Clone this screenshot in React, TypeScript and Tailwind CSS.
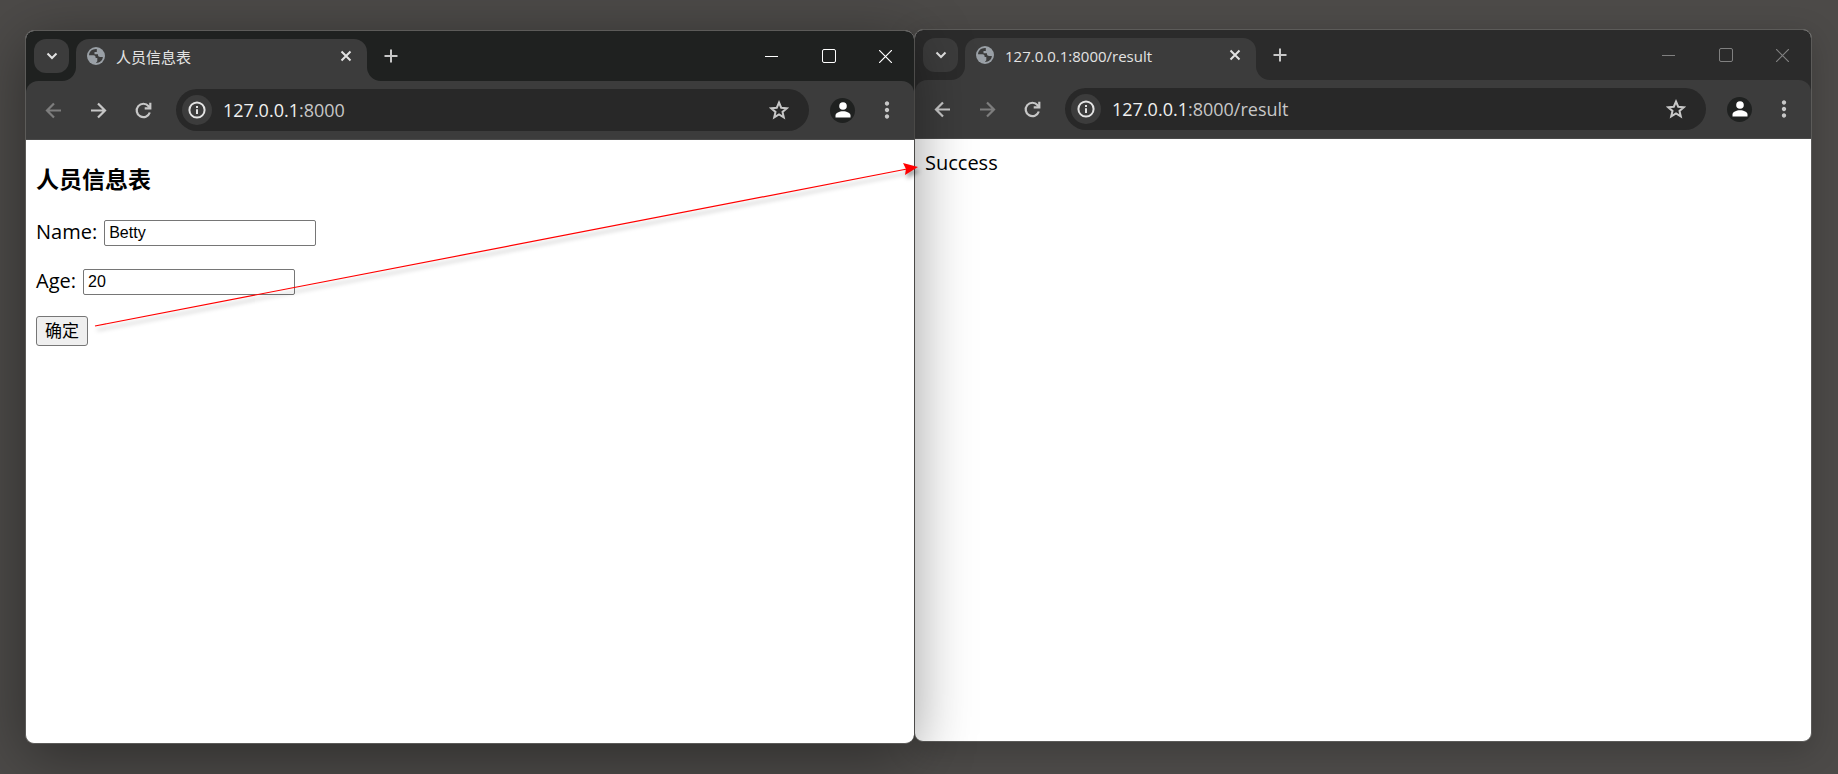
import { type ReactNode, useState } from 'react'
import { MdMoreVert } from 'react-icons/md'

type WindowProps = {
  title: string
  host: string
  path: string
  active?: boolean
  canGoBack?: boolean
  canGoForward?: boolean
  className: string
  children: ReactNode
}

function GlobeIcon() {
  return (
    <svg viewBox="0 0 18 18" className="size-[18px]">
      <circle cx="9" cy="9" r="9" fill="#9aa0a6" />
      <path
        d="M9.800 2c-4.600-.4-7.600 2.600-7.800 6.200h4.500c1.300 0 2.100.8 2.100 2v.9h1.700v3.200l-1.400 1.600c3.500.2 6.600-2.300 7-5.900h-2.700c-1.400 0-2.200-.8-2.200-2V7.200H7.500V5.100h2.300Z"
        fill="#3c3c3c"
      />
    </svg>
  )
}

function ToolbarIcon({ children }: { children: ReactNode }) {
  return (
    <svg viewBox="0 0 23 23" className="size-[23px]" fill="none" stroke="currentColor" strokeWidth="2.200">
      {children}
    </svg>
  )
}

function TabStrip({ title, active }: { title: string; active?: boolean }) {
  return (
    <div className={`flex h-[50px] pl-2 ${active ? 'bg-[#1f2120]' : 'bg-[#2b2b2b]'}`}>
      <button
        aria-label="Search tabs"
        className="mt-2 flex h-[34px] w-[35px] items-center justify-center rounded-xl bg-[#3c3c3c] text-[#e3e3e3]">
        <svg viewBox="0 0 12 8" className="w-3" fill="none" stroke="currentColor" strokeWidth="2">
          <path d="M1.500 1.500 6 6l4.500-4.500" />
        </svg>
      </button>

      <div className="relative mt-2 ml-[7px] flex h-[42px] w-[291px] rounded-t-[13px] bg-[#3c3c3c] pt-2 pl-[11px] text-[#e3e3e3]">
        {/* curved feet of the tab */}
        <svg viewBox="0 0 14 14" className="absolute bottom-0 -left-3.5 w-3.5 text-[#3c3c3c]">
          <path d="M14 0v14H0A14 14 0 0 0 14 0Z" fill="currentColor" />
        </svg>
        <svg viewBox="0 0 14 14" className="absolute -right-3.5 bottom-0 w-3.5 text-[#3c3c3c]">
          <path d="M0 0v14h14A14 14 0 0 1 0 0Z" fill="currentColor" />
        </svg>
        <GlobeIcon />
        <span className="ml-[11px] text-[15px] leading-5">{title}</span>
        <button aria-label="Close tab" className="mr-[15px] ml-auto flex h-[18px] items-center">
          <svg viewBox="0 0 12 12" className="w-3" fill="none" stroke="currentColor" strokeWidth="2">
            <path d="m1.500 1.500 9 9m0-9-9 9" />
          </svg>
        </button>
      </div>

      <button aria-label="New tab" className="ml-[17px] text-[#c7c7c7]">
        <svg viewBox="0 0 14 14" className="w-3.5" fill="none" stroke="currentColor" strokeWidth="2">
          <path d="M7 .5v13M.5 7h13" />
        </svg>
      </button>

      <div className={`ml-auto flex ${active ? 'text-white' : 'text-[#808080]'}`}>
        <button aria-label="Minimize" className="flex w-[57px] items-center justify-center">
          <svg viewBox="0 0 13 13" className="w-[13px]" fill="none" stroke="currentColor">
            <path d="M0 6.500h13" />
          </svg>
        </button>
        <button aria-label="Maximize" className="flex w-[57px] items-center justify-center">
          <svg viewBox="0 0 14 14" className="w-3.5" fill="none" stroke="currentColor">
            <rect x=".5" y=".5" width="13" height="13" rx="1.500" />
          </svg>
        </button>
        <button aria-label="Close" className="flex w-[57px] items-center justify-center">
          <svg viewBox="0 0 13 13" className="w-[13px]" fill="none" stroke="currentColor" strokeWidth="1.200">
            <path d="m0 0 13 13M13 0 0 13" />
          </svg>
        </button>
      </div>
    </div>
  )
}

function BrowserWindow({ title, host, path, active, canGoBack, canGoForward, className, children }: WindowProps) {
  const [address, setAddress] = useState(path)
  const addressId = active ? 'address-front' : 'address-back'

  return (
    <section className={`flex flex-col overflow-hidden rounded-[9px] border-[#5c5b59] bg-white ${className}`}>
      <TabStrip title={title} active={active} />

      <div className={active ? 'bg-[#1f2120]' : 'bg-[#2b2b2b]'}>
        <div className="flex h-[59px] items-center rounded-t-xl border-b border-[#4a4a4a] bg-[#3c3c3c] pl-4 text-[#c7c7c7]">
          <button aria-label="Back" className={canGoBack ? '' : 'text-[#7d7d7d]'}>
            <ToolbarIcon>
              <path d="M19 11.500H5.500M12 4.500l-7 7 7 7" />
            </ToolbarIcon>
          </button>
          <button aria-label="Forward" className={`ml-[22px] ${canGoForward ? '' : 'text-[#7d7d7d]'}`}>
            <ToolbarIcon>
              <path d="M4 11.500h13.500M11 4.500l7 7-7 7" />
            </ToolbarIcon>
          </button>
          <button aria-label="Reload" className="ml-[22px]">
            <ToolbarIcon>
              <path d="M17.800 13.500a6.700 6.700 0 1 1-1.200-6.300l1.400 1.600" />
              <path d="M18.300 3.800v5.600h-5.600" />
            </ToolbarIcon>
          </button>

          <div className="ml-[21px] flex h-[42px] flex-1 items-center rounded-full bg-[#282828] pr-[18px] pl-1.5">
            <button
              aria-label="Site information"
              className="flex size-[30px] items-center justify-center rounded-full bg-[#3c3c3c] text-[#e3e3e3]">
              <svg viewBox="0 0 18 18" className="size-[18px]" fill="none" stroke="currentColor" strokeWidth="2">
                <circle cx="9" cy="9" r="7.600" />
                <path d="M9 8.200V13M9 5v2" />
              </svg>
            </button>
            <div className="ml-[11px] flex flex-1 items-center text-[18px] leading-7">
              <label htmlFor={addressId} className="text-[#f0f0f0]">
                {host}
              </label>
              <input
                id={addressId}
                value={address}
                onChange={(event) => setAddress(event.target.value)}
                className="min-w-0 flex-1 outline-none"
              />
            </div>
            <button aria-label="Bookmark this page">
              <svg viewBox="0 0 24 24" className="size-6" fill="none" stroke="currentColor" strokeWidth="2">
                <path d="m12 4.500 2.200 5.200 5.600.5-4.300 3.700 1.300 5.500-4.800-2.900-4.800 2.900 1.300-5.500-4.300-3.700 5.600-.5Z" />
              </svg>
            </button>
          </div>

          <button
            aria-label="Profile"
            className="ml-[21px] flex size-[25px] items-center justify-center rounded-full bg-[#1f2120] text-white">
            <svg viewBox="0 0 16 16" className="w-4" fill="currentColor">
              <circle cx="8" cy="4" r="3.800" />
              <path d="M.5 15.500v-2c0-2.600 3.800-4.200 7.500-4.200s7.500 1.600 7.500 4.200v2Z" />
            </svg>
          </button>
          <button aria-label="Menu" className="mr-3.5 ml-[19px]">
            <MdMoreVert className="size-[26px]" />
          </button>
        </div>
      </div>

      <div className="flex-1 p-2.5 font-['Open_Sans','Noto_Sans_CJK_SC',sans-serif] text-[20px] text-black">
        {children}
      </div>
    </section>
  )
}

function PersonForm() {
  const [name, setName] = useState('Betty')
  const [age, setAge] = useState('20')

  return (
    <form onSubmit={(event) => event.preventDefault()}>
      <h3 className="mt-3 text-[23px] leading-[34px] font-bold">人员信息表</h3>
      <div className="mt-[21px] flex h-[29px] items-center gap-[7px]">
        <label htmlFor="name">Name:</label>
        <input
          id="name"
          value={name}
          onChange={(event) => setName(event.target.value)}
          className="mt-[3px] h-[26px] w-[212px] rounded-xs border border-[#767676] px-1 font-['Liberation_Sans',sans-serif] text-[16px]"
        />
      </div>
      <div className="mt-5 flex h-[29px] items-center gap-[7px]">
        <label htmlFor="age">Age:</label>
        <input
          id="age"
          value={age}
          onChange={(event) => setAge(event.target.value)}
          className="mt-[3px] h-[26px] w-[212px] rounded-xs border border-[#767676] px-1 font-['Liberation_Sans',sans-serif] text-[16px]"
        />
      </div>
      <button className="mt-[21px] block h-[30px] w-[52px] rounded-[3px] border border-[#767676] bg-[#efefef] text-[17px] leading-7">
        确定
      </button>
    </form>
  )
}

export default function App() {
  return (
    <main className="relative grid h-screen grid-cols-[889fr_898fr] bg-[#4c4a48] pt-[29px] pr-[26px] pb-[30px] pl-[25px] font-['Open_Sans','Noto_Sans_CJK_SC',sans-serif]">
      <BrowserWindow
        title="人员信息表"
        host="127.0.0.1"
        path=":8000"
        active
        canGoForward
        className="z-10 mt-px border-y border-l shadow-[0_12px_60px_rgba(0,0,0,0.4)]">
        <PersonForm />
      </BrowserWindow>

      <BrowserWindow
        title="127.0.0.1:8000/result"
        host="127.0.0.1"
        path=":8000/result"
        canGoBack
        className="mb-0.5 border shadow-[0_8px_32px_rgba(0,0,0,0.2)]">
        <p className="leading-[27px]">Success</p>
      </BrowserWindow>

      {/* arrow from the submit button to the result page */}
      <svg
        width="850"
        height="190"
        className="pointer-events-none absolute top-[154px] left-[85px] z-20 drop-shadow-[2px_4px_2px_rgba(0,0,0,0.35)]">
        <path d="M10 172 822 15" stroke="#f00" strokeWidth="1.200" fill="none" />
        <path d="m833 13-15-4 3 6-1 6Z" fill="#f00" />
      </svg>
    </main>
  )
}
